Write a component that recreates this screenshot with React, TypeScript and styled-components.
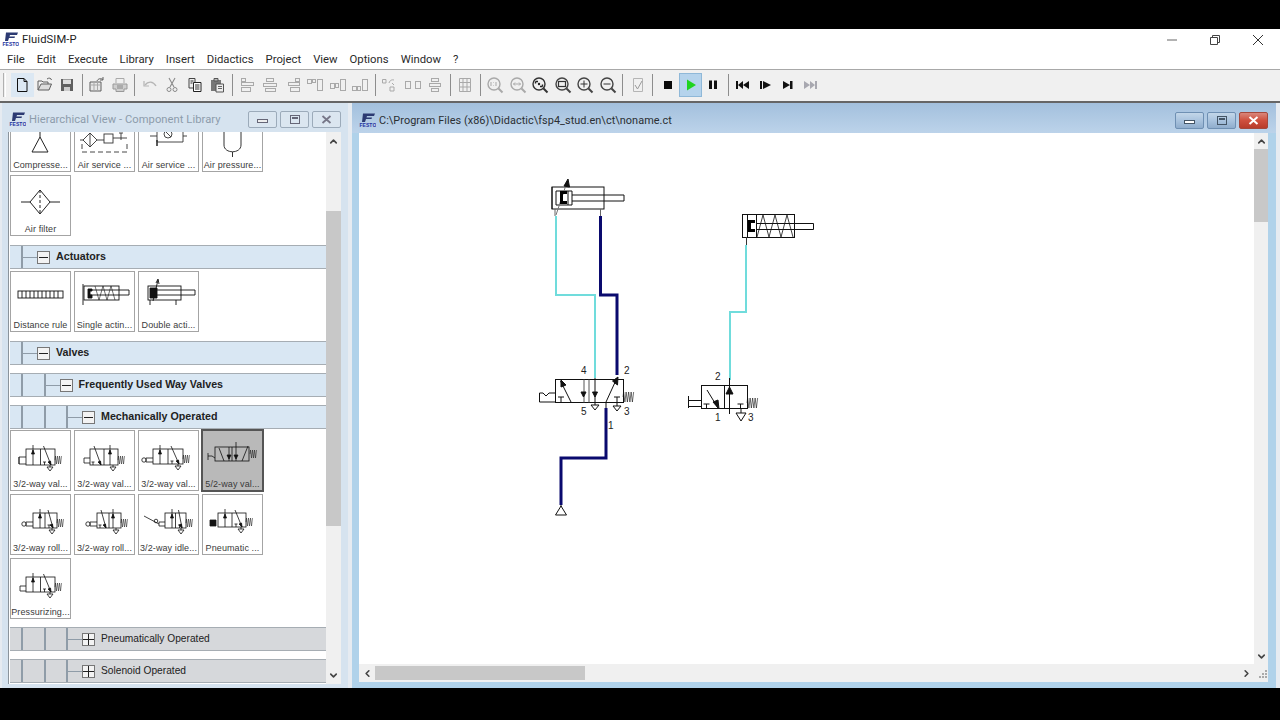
import React from "react";
import styled, { createGlobalStyle } from "styled-components";
import { ChevronUp, ChevronDown, ChevronLeft, ChevronRight } from "lucide-react";

const Global = createGlobalStyle`
  html, body { margin: 0; padding: 0; background: #000; }
  * { box-sizing: border-box; }
`;
const Page = styled.div`
  width: 1280px; height: 720px; display: flex; flex-direction: column; overflow: hidden; background: #000;
  font-family: Roboto, "Noto Sans", sans-serif; color: #222;
`;
const BlackBar = styled.div<{ $h: number }>`height: ${p => p.$h}px; flex: none; background: #000;`;
const AppTitle = styled.div`
  height: 21px; flex: none; background: #fff; display: flex; align-items: center; padding: 0 1px 0 2px; font-size: 11.2px; color: #222;
`;
const AppName = styled.span`margin-left: 3px; flex: 1; letter-spacing: .1px;`;
const CaptionBtn = styled.div`width: 43px; height: 21px; display: flex; align-items: center; justify-content: center;`;
const MenuBar = styled.div`
  height: 20px; flex: none; background: #fff; border-bottom: 1px solid #a8a8a8; display: flex; align-items: center; gap: 12px; padding: 0 0 0 7px; font-size: 11.3px; color: #2a2a2a;
`;
const MenuItem = styled.span``;
const ToolBar = styled.div`
  height: 31px; flex: none; background: #f0f0f0; display: flex; align-items: center; padding: 0 0 1px 3px;
`;
const Grip = styled.div`width: 3px; height: 24px; margin-right: 5px; border-left: 1px solid #b0b0b0; border-right: 1px solid #fff;`;
const ToolBtn = styled.div<{ $on?: "soft" | "strong" }>`
  width: 22.5px; height: 24px; flex: none; display: flex; align-items: center; justify-content: center;
  background: ${p => p.$on === "soft" ? "#dce8f3" : p.$on === "strong" ? "#b5d3ec" : "transparent"};
  border: 1px solid ${p => p.$on === "strong" ? "#8fb8d8" : "transparent"};
`;
const ToolSep = styled.div`width: 7.6px; height: 22px; flex: none; display: flex; justify-content: center;
  &::after { content: ""; width: 1px; height: 100%; background: #8d8d8d; }
`;
const Mdi = styled.div`
  height: 587px; flex: none; background: #e6ebf1; border-top: 2px solid #666; display: flex; padding-left: 2px; gap: 4px;
`;
const LeftWin = styled.div`
  width: 346px; background: #d6e3ef; display: flex; flex-direction: column; padding: 0 7px 4px;
`;
const RightWin = styled.div`
  width: 924px; background: linear-gradient(#a3c0dd 0, #bcd3ea 30px, #b0d2ea 30px); display: flex; flex-direction: column; padding: 0 8px 8px 7px;
`;
const WinTitle = styled.div<{ $active?: boolean; $h: number }>`
  height: ${p => p.$h}px; flex: none; display: flex; align-items: center; gap: 3px; padding-top: 4px; letter-spacing: .05px;
  font-size: ${p => p.$active ? 10.9 : 11.2}px;
  color: ${p => p.$active ? "#2b2f33" : "#8d9cab"};
`;
const TitleText = styled.span`flex: 1;`;
const WinBtn = styled.div<{ $kind: "plain" | "blue" | "red" }>`
  width: 29px; height: 17px; display: flex; align-items: center; justify-content: center; border-radius: 2px;
  border: 1px solid ${p => p.$kind === "plain" ? "#9cabba" : p.$kind === "red" ? "#a5483c" : "#6f90b3"};
  background: ${p => p.$kind === "plain" ? "#dbe6f0" : p.$kind === "red" ? "linear-gradient(#d9867b, #cf4f3d 50%, #b83c2b)" : "linear-gradient(#c3d6e9, #a9c3de 50%, #8fadcd)"};
`;
const LibBody = styled.div`flex: 1; display: flex; min-height: 0; border-left: 1px solid #8b949c; margin-left: -1px;`;
const List = styled.div`width: 317px; background: #fff; overflow: hidden; display: flex; flex-direction: column;`;
const TileGrid = styled.div<{ $pad: string; $lift?: number }>`
  display: grid; grid-template-columns: repeat(4, 61px); column-gap: 3px; row-gap: 3px; flex: none; align-items: start;
  padding: ${p => p.$pad}; margin-top: ${p => p.$lift ?? 0}px;
`;
const Tile = styled.div<{ $sel?: boolean }>`
  height: 61px; display: flex; flex-direction: column; align-items: center; overflow: hidden;
  background: ${p => p.$sel ? "#b9b9b9" : "#fff"}; border: 1px solid ${p => p.$sel ? "#555" : "#a4a4a4"};
  box-shadow: ${p => p.$sel ? "0 0 0 1px #555" : "none"};
`;
const TileArt = styled.svg`display: block; width: 59px; height: 46px; flex: none;`;
const TileLabel = styled.div`
  font-family: "Liberation Sans", Arial, sans-serif; font-size: 9px; line-height: 11px; letter-spacing: .1px; color: #3a3a3a; white-space: nowrap; margin-top: 2px;
`;
const Head = styled.div<{ $open?: boolean }>`
  height: 24px; flex: none; display: flex; align-items: stretch; margin-left: 1px;
  background: ${p => p.$open ? "#d9e7f3" : "#d6d8db"};
  border-top: 1px solid #a6adb3; border-bottom: 1px solid #a6adb3;
  font-family: "Liberation Sans", Arial, sans-serif; color: #222;
  font-size: ${p => p.$open ? 10.7 : 10.2}px; font-weight: ${p => p.$open ? 700 : 400};
  & + & { margin-top: 8px; }
`;
const HeadLead = styled.div`width: 11px; flex: none;`;
const Guide = styled.div<{ $last?: boolean }>`
  width: ${p => p.$last ? 16 : 22.5}px; flex: none; border-left: 2px solid #8f9ca8;
  ${p => p.$last ? "background: linear-gradient(#8f9ca8,#8f9ca8) center/100% 1px no-repeat;" : ""}
`;
const HeadBox = styled.div`
  width: 13px; height: 13px; flex: none; align-self: center; background: #f3f3f3; border: 1px solid #777;
  display: flex; align-items: center; justify-content: center;
`;
const HeadText = styled.div`align-self: center; margin-left: 6px; padding-bottom: 2px;`;
const VScroll = styled.div<{ $w: number }>`
  width: ${p => p.$w}px; flex: none; background: #f0f0f0; display: flex; flex-direction: column; align-items: stretch;
`;
const ArrowBox = styled.div<{ $w?: number; $h?: number }>`
  width: ${p => p.$w ? p.$w + "px" : "auto"}; height: ${p => p.$h ? p.$h + "px" : "auto"}; flex: none;
  display: flex; align-items: center; justify-content: center; color: #444;
`;
const VThumb = styled.div<{ $top: number; $len: number }>`
  height: ${p => p.$len}px; margin-top: ${p => p.$top}px; flex: none; background: #c8c8c8;
`;
const Fill = styled.div`flex: 1;`;
const DocBody = styled.div`flex: 1; min-height: 0; display: flex; flex-direction: column;`;
const DocRow = styled.div`height: 531px; display: flex; flex: none;`;
const Canvas = styled.svg`display: block; width: 895px; height: 531px; background: #fff; flex: none;`;
const HScroll = styled.div`height: 18px; flex: none; background: #f0f0f0; display: flex; align-items: center;`;
const HThumb = styled.div<{ $left: number; $len: number }>`
  width: ${p => p.$len}px; height: 14px; margin-left: ${p => p.$left}px; background: #c8c8c8;
`;
const GripCorner = styled.svg`width: 14px; height: 18px; flex: none; display: block;`;

const Logo = () => (
  <svg width="17" height="15" viewBox="0 0 17 15">
    <path d="M4 0.5H16L15 3H8L7.5 4.5H13L12.5 6H7L6 9H3Z" fill="#2c3a72" />
    <text x="0.5" y="14" fontFamily="Liberation Sans" fontSize="5" fontWeight="700" fill="#2433a0">FESTO</text>
  </svg>
);

const G = "#a9a9a9";
const D = "#5f5f5f";
const K = "#111";
const Ic = ({ children }: { children: React.ReactNode }) => (
  <svg width="18" height="18" viewBox="0 0 18 18" fill="none">{children}</svg>
);
const Align = ({ rects }: { rects: number[][] }) => (
  <Ic>{rects.map((r, i) => <rect key={i} x={r[0] + .5} y={r[1] + .5} width={r[2]} height={r[3]} stroke={G} />)}</Ic>
);
const Mag = ({ children, c = "#777" }: { children?: React.ReactNode; c?: string }) => (
  <Ic>
    <circle cx="8" cy="8" r="6" stroke={c} strokeWidth="1.4" />
    <path d="M12.5 12.5L16.5 16.5" stroke={c} strokeWidth="2" />
    {children}
  </Ic>
);
const tools: (React.ReactNode | "sep")[] = [
  <Ic><path d="M4.5 2.5H11L14 5.5V15.5H4.5ZM11 2.5V5.5H14" stroke={K} /></Ic>,
  <Ic><path d="M2 14V5H6L7 6H12V8" stroke={D} /><path d="M2 14L5 8H15.5L13 14Z" fill="#ddd" stroke={D} /><path d="M11 3C13 1.5 15 2 15.5 4" stroke={D} /></Ic>,
  <Ic><path d="M3 3H15V15H3Z" fill={D} /><path d="M5 3.5H13V8H5Z" fill="#ddd" /><path d="M6 11H12V15H6Z" fill="#ccc" /></Ic>,
  "sep",
  <Ic><path d="M2 15V6H13V15Z" fill="#e8e8e8" stroke={D} /><path d="M2 9H13M6 6V15M9.5 6V15" stroke={G} /><path d="M9 5C10 2.5 13 2 15 3.5M15 1V4H12" stroke={D} /></Ic>,
  <Ic><path d="M5 7V2.5H13V7" stroke={G} /><path d="M2 8H16V13H13V15.5H5V13H2Z" fill="#cfcfcf" stroke="#999" /><path d="M6 10H12M6 12H12" stroke="#888" /></Ic>,
  "sep",
  <Ic><path d="M4 9C7 5 12 5 15 10" stroke="#b5b5b5" strokeWidth="1.4" /><path d="M3 5V10H8" stroke="#b5b5b5" strokeWidth="1.2" /></Ic>,
  <Ic><path d="M6 2L11 11M12 2L7 11" stroke="#8a8a8a" strokeWidth="1.1" /><circle cx="6" cy="13.5" r="2" stroke="#8a8a8a" /><circle cx="12" cy="13.5" r="2" stroke="#8a8a8a" /></Ic>,
  <Ic><path d="M3 2.5H9V12H3Z" fill="#eee" stroke="#444" /><path d="M7.5 6.5H15V15.5H7.5Z" fill="#fff" stroke="#222" /><path d="M9 9H13.5M9 11H13.5M9 13H13.5M4.5 5H7.5M4.5 7H6.5" stroke="#333" /></Ic>,
  <Ic><path d="M3 4H13V15H3Z" fill="#777" /><path d="M6 2.5H10V5H6Z" fill="#bbb" stroke="#555" /><path d="M8 8H15.5V16H8Z" fill="#eee" stroke="#555" /><path d="M10 10.5H14M10 12.5H14" stroke="#666" /></Ic>,
  "sep",
  <Align rects={[[2, 2, 4, 3], [2, 6, 12, 3], [2, 11, 9, 4]]} />,
  <Align rects={[[5, 2, 7, 3], [2, 7, 13, 3], [4, 12, 10, 3]]} />,
  <Align rects={[[11, 2, 4, 3], [4, 6, 11, 3], [6, 11, 9, 4]]} />,
  <Align rects={[[1, 3, 4, 4], [6, 3, 3, 3], [11, 3, 5, 11]]} />,
  <Align rects={[[1, 7, 4, 5], [6, 7, 3, 4], [11, 3, 5, 11]]} />,
  <Align rects={[[1, 10, 4, 4], [6, 10, 3, 4], [11, 3, 5, 11]]} />,
  "sep",
  <Ic><path d="M1.5 3.5H5V7H1.5ZM9 11H13V15H9Z" stroke={G} /><path d="M8 7C9 4 11 3.5 13 4M11 7L13 9" stroke={G} /></Ic>,
  <Align rects={[[1, 5, 5, 7], [11, 5, 5, 7], [8, 2, 0, 13]]} />,
  <Align rects={[[5, 2, 7, 3], [8, 5, 0, 2], [3, 7, 11, 3], [5, 12, 7, 3]]} />,
  "sep",
  <Ic><path d="M3.5 2.5H14.5V15.5H3.5ZM3.5 6.5H14.5M3.5 11H14.5M7 2.5V15.5M11 2.5V15.5" stroke={G} /></Ic>,
  "sep",
  <Mag c={G}><path d="M5 6V10M7.5 6.5V7M7.5 9V9.5M10 6V10" stroke={G} /></Mag>,
  <Mag c={G}><path d="M4.5 8H11.5M4.5 8L6 6.5M4.5 8L6 9.5M11.5 8L10 6.5M11.5 8L10 9.5" stroke={G} /></Mag>,
  <Mag c="#333"><path d="M4.5 5.5H7M4.5 5.5V7.5M11.5 10.5H9M11.5 10.5V8.5" stroke="#222" strokeWidth="1.4" /><circle cx="8" cy="8" r="1.2" fill="#222" /></Mag>,
  <Mag c="#444"><rect x="4.5" y="5.5" width="7" height="5" stroke="#333" strokeWidth="1.2" /></Mag>,
  <Mag c="#444"><path d="M4.5 8H11.5M8 4.5V11.5" stroke="#333" /></Mag>,
  <Mag c="#444"><path d="M4.5 8H11.5" stroke="#333" /></Mag>,
  "sep",
  <Ic><path d="M4.5 2.5H13.5V15.5H4.5Z" stroke="#b5b5b5" /><path d="M6 9L8.5 13L13 5" stroke="#999" /></Ic>,
  "sep",
  <Ic><rect x="5" y="5" width="8" height="8" fill="#0a0a0a" /></Ic>,
  <Ic><path d="M5 3.5L14 9L5 14.5Z" fill="#1fd41f" /></Ic>,
  <Ic><path d="M5 4.5H8V13H5ZM10 4.5H13V13H10Z" fill="#111" /></Ic>,
  "sep",
  <Ic><path d="M2 5H4V13H2ZM4 9L9 5V13ZM9 9L15 5V13Z" fill="#111" /></Ic>,
  <Ic><path d="M3 5H5V13H3ZM6 5L14 9L6 13Z" fill="#111" /></Ic>,
  <Ic><path d="M4 5L11 9L4 13ZM11 5H13.5V13H11Z" fill="#111" /></Ic>,
  <Ic><path d="M2 5L8 9L2 13ZM8 5L13 9L8 13ZM13 5H15V13H13Z" fill="#a8a8b0" /></Ic>,
];

const spring = (x: number, y: number, h: number, n = 4, st = 1.8) => {
  let d = `M${x} ${y + h / 2}`;
  for (let i = 0; i < n; i++) d += `L${x + st * i + st / 2} ${i % 2 ? y + h : y}`;
  return d;
};

type Act = "push" | "roller" | "idle" | "pilot" | "press";
const Glyph = ({ x, y, act, flip, w = 29, h = 16 }: { x: number; y: number; act: Act; flip?: boolean; w?: number; h?: number }) => {
  const m = x + w / 2;
  const ax = flip ? x + w - 8 : x + 7;
  const dx0 = flip ? x + 4 : m + 3;
  const dx1 = flip ? m - 3 : x + w - 4;
  return (
    <g fill="none" stroke="#111" strokeWidth=".8">
      <rect x={x} y={y} width={w} height={h} />
      <path d={`M${m} ${y}V${y + h}`} />
      <path d={`M${ax} ${y - 4}V${y + h}`} />
      <path d={`M${ax - 1.5} ${y + 5}L${ax} ${y + 1}L${ax + 1.5} ${y + 5}Z`} fill="#111" />
      <path d={`M${dx0} ${y - 3}L${dx1} ${y + h}`} />
      <path d={`M${dx1 - 3} ${y + h - 3}L${dx1} ${y + h}L${dx1 - .5} ${y + h - 4}Z`} fill="#111" />
      <path d={`M${m + (flip ? -w / 2 + 3 : 4)} ${y + h}V${y + h - 3}M${m + (flip ? -w / 2 + 1.5 : 2.5)} ${y + h - 3}H${m + (flip ? -w / 2 + 4.5 : 5.5)}`} />
      <path d={`M${x + w - 5} ${y + h}V${y + h + 2}M${x + w - 8} ${y + h + 2}H${x + w - 2}L${x + w - 5} ${y + h + 6}Z`} />
      <path d={spring(x + w, y + h - 9, 8, 7, 1)} strokeWidth=".5" />
      {act === "push" && <path d={`M${x} ${y + 8}H${x - 7}V${y + 15}H${x}M${x - 7} ${y + 8}V${y + 15}`} />}
      {act === "press" && <path d={`M${x} ${y + 9}H${x - 6}V${y + 14}H${x}`} />}
      {act === "roller" && <><path d={`M${x} ${y + 9}H${x - 7}V${y + 13}H${x}`} /><circle cx={x - 9} cy={y + 11} r="2.2" /></>}
      {act === "idle" && <><path d={`M${x} ${y + 9}H${x - 6}V${y + 13}H${x}M${x - 6} ${y + 11}L${x - 21} ${y + 3}`} /><circle cx={x - 9} cy={y + 8} r="1.8" /></>}
      {act === "pilot" && <path d={`M${x - 8} ${y + 7}H${x - 2}V${y + 13}H${x - 8}Z`} fill="#111" />}
    </g>
  );
};

const Five = ({ x, y }: { x: number; y: number }) => (
  <g fill="none" stroke="#111" strokeWidth=".8">
    <rect x={x} y={y} width="34" height="14" />
    <path d={`M${x + 17} ${y}V${y + 14}M${x + 14} ${y}V${y + 14}M${x + 21} ${y - 5}V${y + 14}M${x + 4} ${y + 1}L${x + 9} ${y + 14}M${x + 27} ${y + 14}L${x + 33} ${y - 1}`} />
    <path d={`M${x - 7} ${y + 6}V${y + 13}M${x - 7} ${y + 9}H${x - 3}L${x} ${y + 11}`} />
    <path d={`M${x + 12} ${y + 8}h4l-2 4Z M${x + 19} ${y + 8}h4l-2 4Z`} fill="#111" />
    <path d={spring(x + 35, y + 3, 8, 7, 1)} strokeWidth=".5" />
  </g>
);

const Compressed = () => <TileArt viewBox="0 0 59 46"><path d="M29 20V25M29 25L21 40H37Z" fill="none" stroke="#222" /></TileArt>;
const Service1 = () => (
  <TileArt viewBox="0 0 59 46"><g fill="none" stroke="#333" strokeWidth=".9">
    <path d="M8 28L15 21L22 28L15 35ZM5 28H8M22 28H29M15 21V35" />
    <rect x="29" y="22" width="9" height="9" />
    <path d="M38 26H52M46 21V28M44 21H48" />
    <path d="M7 32V40H52V30" strokeDasharray="5 3" />
  </g></TileArt>
);
const Service2 = () => (
  <TileArt viewBox="0 0 59 46"><g fill="none" stroke="#333" strokeWidth=".9">
    <path d="M11 24H18M18 20V30H44V20M44 24H48" />
    <path d="M18 28V34" strokeWidth="1.6" />
    <circle cx="29" cy="22" r="4" /><path d="M26 19L32 25" />
  </g></TileArt>
);
const Reservoir = () => <TileArt viewBox="0 0 59 46"><path d="M21 20V33C21 42 38 42 38 33V20M29.5 40V45" fill="none" stroke="#333" /></TileArt>;
const Filter = () => <TileArt viewBox="0 0 59 46"><path d="M10 26H19M19 26L29 14L39 26L29 38ZM39 26H49" fill="none" stroke="#222" /><path d="M29 14V38" stroke="#222" strokeDasharray="3 2" /></TileArt>;
const Rule = () => (
  <TileArt viewBox="0 0 59 46"><g fill="none" stroke="#111" strokeWidth=".9">
    <rect x="7" y="19" width="45" height="7" />
    <path d="M11 19V26M15 19V26M19 19V26M23 19V26M27 19V26M31 19V26M35 19V26M39 19V26M43 19V26M47 19V26" />
  </g></TileArt>
);
const SingleCyl = () => (
  <TileArt viewBox="0 0 59 46"><g fill="none" stroke="#111" strokeWidth=".9">
    <rect x="9" y="14" width="35" height="14" />
    <path d="M14 18H54V23H14M8 12V33" /><path d="M13 17H17V19H15V23H17V26H13Z" fill="#111" />
    <path d="M20 14L24 28L28 14L32 28L36 14L40 28" strokeWidth=".6" />
  </g></TileArt>
);
const DoubleCyl = () => (
  <TileArt viewBox="0 0 59 46"><g fill="none" stroke="#111" strokeWidth=".9">
    <rect x="9" y="14" width="33" height="14" />
    <path d="M17 18H56V23H17M11 28V33M37 28V33" /><path d="M11 16H18V26H11Z" fill="#111" />
    <path d="M14 29L19 8M17 11L19 7L20 12" />
  </g></TileArt>
);
const Val = (p: { x: number; y: number; act: Act; flip?: boolean; w?: number; h?: number }) => <TileArt viewBox="0 0 59 46"><Glyph {...p} /></TileArt>;
const Val5 = () => <TileArt viewBox="0 0 59 46"><Five x={12} y={16} /></TileArt>;

const Section = ({ level, open, children }: { level: number; open?: boolean; children: string }) => (
  <Head $open={open}>
    <HeadLead />
    {Array.from({ length: level }).map((_, i) => <Guide key={i} $last={i === level - 1} />)}
    <HeadBox>
      <svg width="11" height="11" viewBox="0 0 11 11"><path d={open ? "M1 5.5H10" : "M0 5.5H11M5.5 0V11"} stroke="#222" /></svg>
    </HeadBox>
    <HeadText>{children}</HeadText>
  </Head>
);

const menu = ["File", "Edit", "Execute", "Library", "Insert", "Didactics", "Project", "View", "Options", "Window", "?"];

const ink = "#111";
const Diagram = () => (
  <Canvas viewBox="359 133 895 531">
    <g fontFamily="Liberation Sans" fontSize="10" fill="#222">
      <text x="581" y="374">4</text><text x="624" y="374">2</text><text x="581" y="415">5</text><text x="624" y="415">3</text><text x="608" y="429">1</text>
      <text x="715" y="380">2</text><text x="715" y="421">1</text><text x="748" y="421">3</text>
    </g>
    <g fill="none">
      <path d="M556 216V295H595V378" stroke="#70dcdc" strokeWidth="2" />
      <path d="M746 245V312H730V380" stroke="#70dcdc" strokeWidth="2" />
      <path d="M600.5 216V295H617V375" stroke="#0a0a6e" strokeWidth="3" />
      <path d="M606 408V458H561V505" stroke="#0a0a6e" strokeWidth="3" />
    </g>
    <g fill="none" stroke={ink} strokeWidth="1">
      <path d="M561 505V507M561 506L555.5 515H566.5Z" />
      <rect x="552" y="187" width="52" height="22" />
      <path d="M556 191V205H572V191ZM572 195H624V201H572M568 191V205M552 187V209" />
      <path d="M600.5 209V216" stroke="#666" />
      <path d="M555 209V216" stroke="#666" />
      <path d="M556 215L567 182" stroke="#777" />
      <path d="M564 186L568 179L569.5 187Z" fill="#111" />
      <path d="M560 191H567V194H563V201H567V204H560Z" fill="#000" stroke="none" />

      <rect x="742.5" y="214.5" width="52" height="23" />
      <path d="M747.5 214.5V237.5M756.5 214.5V237.5M756.5 223.5H813.5V229.5H756.5" />
      <path d="M748 220H755V223H751V229H755V232H748Z" fill="#000" stroke="none" />
      <path d="M757 237L763 215L769 237L775 215L781 237L787 215L793 237" strokeWidth=".8" />
      <path d="M746.5 237V245" stroke="#333" />

      <rect x="555.5" y="379.5" width="68" height="23" />
      <path d="M589 379.5V402.5M584 379.5V402.5" stroke="#555" />
      <path d="M595 378V402" />
      <path d="M617 378L606 402M606 402V408" />
      <path d="M612.5 381L618 377L617.5 385Z" fill="#111" />
      <path d="M560.5 381L571 402" />
      <path d="M561 380L566 385L561 387Z" fill="#111" />
      <path d="M561 402V397M558 397H564" />
      <path d="M617 402V397M614 397H620M617 402V406L613 406L617 411L621 406H617" />
      <path d="M581 392H586L583.5 397ZM592.5 392H597.5L595 397Z" fill="#111" />
      <path d="M595 402V405M591 405H599L595 410Z" />
      <path d={spring(623, 392, 10, 9, 1.25)} strokeWidth=".6" />
      <path d="M555 393H549L546 396L543 393H539.5V402H555" />

      <rect x="701.5" y="385.5" width="46" height="23" />
      <path d="M724.5 385.5V408.5M729.5 378V414" />
      <path d="M726 394L729.5 387L733 394Z" fill="#111" />
      <path d="M707 390L718 408" />
      <path d="M713 402L719 409L718 400Z" fill="#111" />
      <path d="M706.5 408V404M703.5 404H709.5M740.5 408V404M737.5 404H743.5" />
      <path d="M741 408V413M736 413H746L741 421Z" />
      <path d={spring(747, 398, 10, 9, 1.25)} strokeWidth=".6" />
      <path d="M701.5 400.5H688.5M688.5 396V408M701.5 406.5H688.5" />
    </g>
  </Canvas>
);

export default function App() {
  return (
    <Page>
      <Global />
      <BlackBar $h={29} />
      <AppTitle>
        <Logo /><AppName>FluidSIM-P</AppName>
        <CaptionBtn><svg width="12" height="12" viewBox="0 0 12 12"><path d="M1 6H11" stroke="#666" /></svg></CaptionBtn>
        <CaptionBtn><svg width="12" height="12" viewBox="0 0 12 12" fill="none"><path d="M1.5 3.5H8.5V10.5H1.5ZM3.5 3.5V1.5H10.5V8.5H8.5" stroke="#444" /></svg></CaptionBtn>
        <CaptionBtn><svg width="12" height="12" viewBox="0 0 12 12"><path d="M1 1L11 11M11 1L1 11" stroke="#333" /></svg></CaptionBtn>
      </AppTitle>
      <MenuBar>{menu.map(m => <MenuItem key={m}>{m}</MenuItem>)}</MenuBar>
      <ToolBar>
        <Grip />
        {tools.map((t, i) => t === "sep" ? <ToolSep key={i} /> : <ToolBtn key={i} $on={i === 0 ? "soft" : i === 35 ? "strong" : undefined}>{t}</ToolBtn>)}
      </ToolBar>
      <Mdi>
        <LeftWin>
          <WinTitle $h={29}>
            <Logo /><TitleText>Hierarchical View - Component Library</TitleText>
            <WinBtn $kind="plain"><svg width="11" height="7" viewBox="0 0 11 7"><rect x=".5" y="3.5" width="10" height="3" fill="#eee" stroke="#667" /></svg></WinBtn>
            <WinBtn $kind="plain"><svg width="10" height="9" viewBox="0 0 10 9" fill="none"><rect x=".5" y=".5" width="9" height="8" stroke="#667" /><path d="M2 3H8" stroke="#667" strokeWidth="2" /></svg></WinBtn>
            <WinBtn $kind="plain"><svg width="11" height="9" viewBox="0 0 11 9"><path d="M1.5 1L9.5 8M9.5 1L1.5 8" stroke="#778" strokeWidth="1.8" /></svg></WinBtn>
          </WinTitle>
          <LibBody>
            <List>
              <TileGrid $lift={-21} $pad="0 0 9px 1px">
                <Tile><Compressed /><TileLabel>Compresse...</TileLabel></Tile>
                <Tile><Service1 /><TileLabel>Air service ...</TileLabel></Tile>
                <Tile><Service2 /><TileLabel>Air service ...</TileLabel></Tile>
                <Tile><Reservoir /><TileLabel>Air pressure...</TileLabel></Tile>
                <Tile><Filter /><TileLabel>Air filter</TileLabel></Tile>
              </TileGrid>
              <Section level={1} open>Actuators</Section>
              <TileGrid $pad="2px 0 9px 1px">
                <Tile><Rule /><TileLabel>Distance rule</TileLabel></Tile>
                <Tile><SingleCyl /><TileLabel>Single actin...</TileLabel></Tile>
                <Tile><DoubleCyl /><TileLabel>Double acti...</TileLabel></Tile>
              </TileGrid>
              <Section level={1} open>Valves</Section>
              <Section level={2} open>Frequently Used Way Valves</Section>
              <Section level={3} open>Mechanically Operated</Section>
              <TileGrid $pad="1px 0 8px 1px">
                <Tile><Val x={15} y={18} act="push" /><TileLabel>3/2-way val...</TileLabel></Tile>
                <Tile><Val x={15} y={18} act="press" flip w={28} /><TileLabel>3/2-way val...</TileLabel></Tile>
                <Tile><Val x={14} y={18} act="roller" w={30} h={15} /><TileLabel>3/2-way val...</TileLabel></Tile>
                <Tile $sel><Val5 /><TileLabel>5/2-way val...</TileLabel></Tile>
                <Tile><Val x={22} y={18} act="roller" w={24} h={15} /><TileLabel>3/2-way roll...</TileLabel></Tile>
                <Tile><Val x={22} y={18} act="roller" flip w={24} h={15} /><TileLabel>3/2-way roll...</TileLabel></Tile>
                <Tile><Val x={26} y={18} act="idle" w={21} h={15} /><TileLabel>3/2-way idle...</TileLabel></Tile>
                <Tile><Val x={15} y={18} act="pilot" w={28} h={14} /><TileLabel>Pneumatic ...</TileLabel></Tile>
                <Tile><Val x={15} y={18} act="press" w={29} h={15} /><TileLabel>Pressurizing...</TileLabel></Tile>
              </TileGrid>
              <Section level={3}>Pneumatically Operated</Section>
              <Section level={3}>Solenoid Operated</Section>
            </List>
            <VScroll $w={15}>
              <ArrowBox $h={18}><ChevronUp size={11} strokeWidth={3.5} /></ArrowBox>
              <VThumb $top={61} $len={315} />
              <Fill />
              <ArrowBox $h={18}><ChevronDown size={11} strokeWidth={3.5} /></ArrowBox>
            </VScroll>
          </LibBody>
        </LeftWin>
        <RightWin>
          <WinTitle $h={30} $active>
            <Logo /><TitleText>C:\Program Files (x86)\Didactic\fsp4_stud.en\ct\noname.ct</TitleText>
            <WinBtn $kind="blue"><svg width="11" height="7" viewBox="0 0 11 7"><rect x=".5" y="3.5" width="10" height="3" fill="#fff" stroke="#456" /></svg></WinBtn>
            <WinBtn $kind="blue"><svg width="10" height="9" viewBox="0 0 10 9" fill="none"><rect x=".5" y=".5" width="9" height="8" stroke="#456" /><path d="M2 3H8" stroke="#456" strokeWidth="2" /></svg></WinBtn>
            <WinBtn $kind="red"><svg width="11" height="9" viewBox="0 0 11 9"><path d="M1.5 1L9.5 8M9.5 1L1.5 8" stroke="#fff" strokeWidth="2" /></svg></WinBtn>
          </WinTitle>
          <DocBody>
            <DocRow>
              <Diagram />
              <VScroll $w={14}>
                <ArrowBox $h={16}><ChevronUp size={11} strokeWidth={3.5} /></ArrowBox>
                <VThumb $top={0} $len={73} />
                <Fill />
                <ArrowBox $h={16}><ChevronDown size={11} strokeWidth={3.5} /></ArrowBox>
              </VScroll>
            </DocRow>
            <HScroll>
              <ArrowBox $w={16}><ChevronLeft size={11} strokeWidth={3.5} /></ArrowBox>
              <HThumb $left={0} $len={210} />
              <Fill />
              <ArrowBox $w={16}><ChevronRight size={11} strokeWidth={3.5} /></ArrowBox>
              <GripCorner viewBox="0 0 14 18"><path d="M11 6h2v2h-2zM8 9h2v2H8zM11 9h2v2h-2zM5 12h2v2H5zM8 12h2v2H8zM11 12h2v2h-2z" fill="#aaa" /></GripCorner>
            </HScroll>
          </DocBody>
        </RightWin>
      </Mdi>
      <BlackBar $h={30} />
    </Page>
  );
}
